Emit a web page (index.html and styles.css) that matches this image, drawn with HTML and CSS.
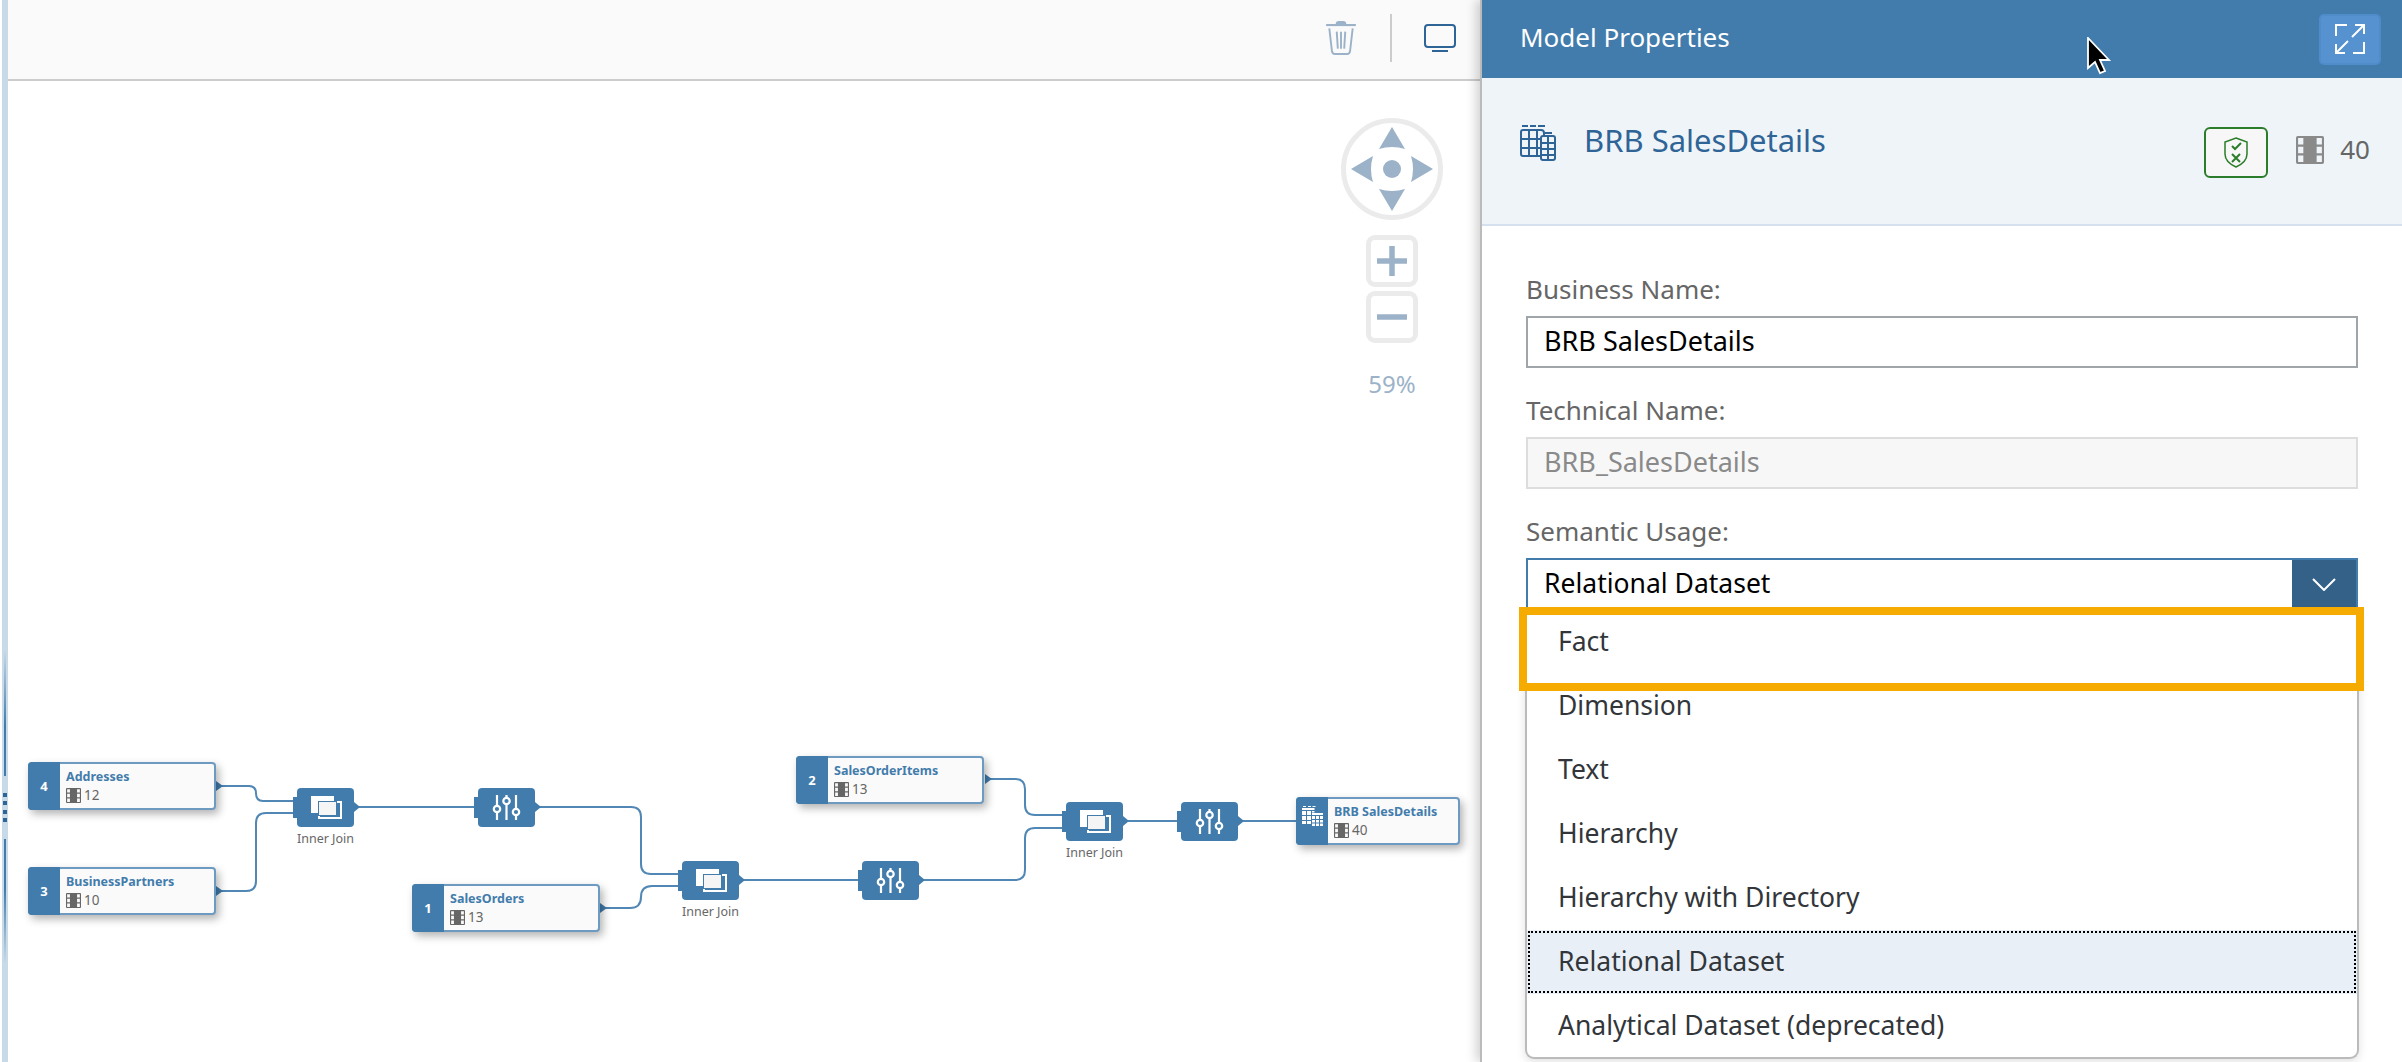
FILE: index.html
```html
<!DOCTYPE html>
<html lang="en">
  <head>
    <meta charset="UTF-8" />
    <title>Model Properties</title>
    <link rel="stylesheet" href="styles.css">
  </head>
  <body>
    <svg class="defs" width="0" height="0">
      <symbol id="columns" viewBox="0 0 16 16">
        <path fill="currentColor" fill-rule="evenodd" d="M0 1a1 1 0 0 1 1-1h14a1 1 0 0 1 1 1v14a1 1 0 0 1-1 1H1a1 1 0 0 1-1-1zM1.2 1.2v3.6h3v-3.6zM1.2 6.2v3.6h3v-3.6zM1.2 11.2v3.6h3v-3.6zM11.8 1.2v3.6h3v-3.6zM11.8 6.2v3.6h3v-3.6zM11.8 11.2v3.6h3v-3.6z"/>
      </symbol>
      <symbol id="join" viewBox="0 0 57 39">
        <rect x="22" y="14" width="22" height="16" fill="none" stroke="#fff" stroke-width="2"/>
        <rect x="14" y="8" width="23" height="17" fill="#fff"/>
        <rect x="21.5" y="13.5" width="18" height="14" fill="#f5f5f5" stroke="#427cac"/>
      </symbol>
      <symbol id="sliders" viewBox="0 0 57 39">
        <path d="M19 7V32M28.500 7V32M38 7V32" stroke="#fff" stroke-width="2.200" fill="none"/>
        <circle cx="19" cy="21" r="3.200" fill="#427cac" stroke="#fff" stroke-width="2.200"/>
        <circle cx="28.500" cy="13" r="3.200" fill="#427cac" stroke="#fff" stroke-width="2.200"/>
        <circle cx="38" cy="24" r="3.200" fill="#427cac" stroke="#fff" stroke-width="2.200"/>
      </symbol>
    </svg>

    <div class="app">
      <div class="workspace">
        <div class="strip">
          <span class="grip-line grip-up"></span>
          <span class="grip-dots"></span>
          <span class="grip-line grip-down"></span>
        </div>
        <div class="editor">
          <div class="toolbar">
            <svg class="trash" width="30" height="34" viewBox="0 0 28 32">
              <path d="M0 3.800H28" stroke="#9cb2c8" stroke-width="2"/>
              <path d="M9 3Q9 0 12 0H16Q19 0 19 3Z" fill="#9cb2c8"/>
              <path d="M3 7L5.500 28.500Q6 31 8 31H20Q22 31 22.500 28.500L25 7M10 10L11 26M14 10V26M18 10L17 26" fill="none" stroke="#9cb2c8" stroke-width="1.800"/>
            </svg>
            <span class="toolbar-sep"></span>
            <svg width="32" height="28" viewBox="0 0 32 28">
              <rect x="1" y="1" width="30" height="22" rx="3" fill="none" stroke="#2f6497" stroke-width="2"/>
              <path d="M8 27H24" stroke="#2f6497" stroke-width="2"/>
            </svg>
          </div>

          <div class="canvas">
            <svg class="wires" width="1472" height="981">
              <g fill="none" stroke="#5187b5" stroke-width="2">
                <path d="M208 705H241Q248 705 248 712.500Q248 720 255 720H285"/>
                <path d="M208 810H238Q248 810 248 800V742Q248 732 258 732H285"/>
                <path d="M346 726H466"/>
                <path d="M527 726H623Q633 726 633 736V783Q633 793 643 793H670"/>
                <path d="M592 827H622Q633 827 633 816Q633 805 644 805H670"/>
                <path d="M730 799H850"/>
                <path d="M977 698H1007Q1017 698 1017 708V724Q1017 734 1027 734H1054"/>
                <path d="M911 799H1007Q1017 799 1017 789V757Q1017 747 1027 747H1054"/>
                <path d="M1115 740H1169"/>
                <path d="M1230 740H1288"/>
              </g>
              <g fill="#427cac">
                <path d="M208 700L215 705L208 710Z"/>
                <path d="M208 805L215 810L208 815Z"/>
                <path d="M592 822L599 827L592 832Z"/>
                <path d="M977 693L984 698L977 703Z"/>
              </g>
            </svg>

            <div class="node node-addresses">
              <div class="node-badge">4</div>
              <div class="node-body">
                <div class="node-title">Addresses</div>
                <div class="node-count"><svg width="15" height="15"><use href="#columns"/></svg>12</div>
              </div>
            </div>
            <div class="node node-partners">
              <div class="node-badge">3</div>
              <div class="node-body">
                <div class="node-title">BusinessPartners</div>
                <div class="node-count"><svg width="15" height="15"><use href="#columns"/></svg>10</div>
              </div>
            </div>
            <div class="node node-orders">
              <div class="node-badge">1</div>
              <div class="node-body">
                <div class="node-title">SalesOrders</div>
                <div class="node-count"><svg width="15" height="15"><use href="#columns"/></svg>13</div>
              </div>
            </div>
            <div class="node node-items">
              <div class="node-badge">2</div>
              <div class="node-body">
                <div class="node-title">SalesOrderItems</div>
                <div class="node-count"><svg width="15" height="15"><use href="#columns"/></svg>13</div>
              </div>
            </div>
            <div class="node node-result">
              <div class="node-badge node-badge-icon">
                <svg width="21" height="20" viewBox="0 0 21 20">
                  <path d="M1 0h3v1H1zM6 0h3v1H6zM10.500 0h3v1h-3z" fill="#fff"/>
                  <path d="M0 2h12.500v2H0zM0 5h4v4H0zM5 5h4v4H5zM0 10h4v4H0zM5 10h4v4H5zM0 15h4v3H0zM5 15h4v3H5zM10 5h2.500v1.500H10z" fill="#fff"/>
                  <path d="M10 7h11v2H10zM10 10h3v3h-3zM14 10h3v3h-3zM18 10h3v3h-3zM10 14h3v2.500h-3zM14 14h3v2.500h-3zM18 14h3v2.500h-3zM10 17.500h3V20h-3zM14 17.500h3V20h-3zM18 17.500h3V20h-3z" fill="#fff"/>
                </svg>
              </div>
              <div class="node-body">
                <div class="node-title">BRB SalesDetails</div>
                <div class="node-count"><svg width="15" height="15"><use href="#columns"/></svg>40</div>
              </div>
            </div>

            <div class="op op-join1"><svg width="57" height="39"><use href="#join"/></svg><span class="op-label">Inner Join</span></div>
            <div class="op op-calc1"><svg width="57" height="39"><use href="#sliders"/></svg></div>
            <div class="op op-join2"><svg width="57" height="39"><use href="#join"/></svg><span class="op-label">Inner Join</span></div>
            <div class="op op-calc2"><svg width="57" height="39"><use href="#sliders"/></svg></div>
            <div class="op op-join3"><svg width="57" height="39"><use href="#join"/></svg><span class="op-label">Inner Join</span></div>
            <div class="op op-calc3"><svg width="57" height="39"><use href="#sliders"/></svg></div>

            <div class="nav-tools">
              <svg width="102" height="102" viewBox="0 0 102 102">
                <circle cx="51" cy="51" r="48.500" fill="#fff" stroke="#ebebeb" stroke-width="5"/>
                <g fill="#9cb2c8">
                  <path d="M51 9L64 31Q51 27 38 31Z"/>
                  <path d="M51 93L64 71Q51 75 38 71Z"/>
                  <path d="M10 51L32 38Q28 51 32 64Z"/>
                  <path d="M92 51L70 38Q74 51 70 64Z"/>
                  <circle cx="51" cy="51" r="9"/>
                </g>
              </svg>
              <div class="zoom-btn zoom-plus">
                <svg width="30" height="30" viewBox="0 0 30 30"><path d="M0 15H30M15 0V30" stroke="#9cb2c8" stroke-width="5.500"/></svg>
              </div>
              <div class="zoom-btn zoom-minus">
                <svg width="30" height="30" viewBox="0 0 30 30"><path d="M0 15H30" stroke="#9cb2c8" stroke-width="5.500"/></svg>
              </div>
              <div class="zoom-value">59%</div>
            </div>
          </div>
        </div>
      </div>

      <aside class="panel">
        <div class="panel-header">
          <span class="panel-title">Model Properties</span>
          <button class="expand-btn">
            <svg width="30" height="30" viewBox="0 0 30 30" fill="none" stroke="#fff" stroke-width="2">
              <path d="M1 12V1H12M29 18V29H18M17 13L29 1M20 1H29V10M13 17L1 29M1 20V29H10"/>
            </svg>
          </button>
        </div>

        <div class="panel-sub">
          <svg class="entity-icon" width="36" height="36" viewBox="0 0 36 36" fill="none" stroke="#2f6497" stroke-width="2">
            <path d="M2 1H8M10 1H16M18 1H25"/>
            <path d="M21 31H3Q1 31 1 29V7Q1 5 3 5H21Q24 5 24 8V10M1 14H21M1 23H21M9 5V31M17 5V31"/>
            <rect x="21" y="11" width="14" height="24" rx="2" fill="#eff4f9"/>
            <path d="M21 18H35M21 24H35M21 30H35M28 11V35"/>
            <path d="M25 8H32"/>
          </svg>
          <span class="entity-name">BRB SalesDetails</span>
          <button class="shield-btn">
            <svg width="24" height="31" viewBox="0 0 24 31" fill="none" stroke="#2b7d2b">
              <path d="M12 1L23 5V17Q23 25 12 30Q1 25 1 17V5Z" stroke-width="1.500"/>
              <path d="M8 9L11 12L17 6M8 17L16 25M16 17L8 25" stroke-width="2"/>
            </svg>
          </button>
          <svg class="sub-columns" width="28" height="28"><use href="#columns"/></svg>
          <span class="sub-count">40</span>
        </div>

        <form class="panel-form">
          <div class="field">
            <label>Business Name:</label>
            <div class="input">BRB SalesDetails</div>
          </div>
          <div class="field">
            <label>Technical Name:</label>
            <div class="input input-disabled">BRB_SalesDetails</div>
          </div>
          <div class="field">
            <label>Semantic Usage:</label>
            <div class="select">
              <span>Relational Dataset</span>
              <span class="select-arrow">
                <svg width="24" height="13" viewBox="0 0 24 13" fill="none" stroke="#fff" stroke-width="2"><path d="M1 1L12 12L23 1"/></svg>
              </span>
              <div class="popup">
                <ul class="options">
                  <li>Fact</li>
                  <li>Dimension</li>
                  <li>Text</li>
                  <li>Hierarchy</li>
                  <li>Hierarchy with Directory</li>
                  <li class="selected">Relational Dataset</li>
                  <li>Analytical Dataset (deprecated)</li>
                </ul>
                <div class="highlight"></div>
              </div>
            </div>
          </div>
        </form>

        <svg class="cursor" width="26" height="38" viewBox="0 0 26 38">
          <path d="M2 1V31L9 25L14 36L19 34L14 23H23Z" fill="#000" stroke="#fff" stroke-width="1.800"/>
        </svg>
      </aside>
    </div>
  </body>
</html>
```

FILE: styles.css
```css
* {
  box-sizing: border-box;
}

html,
body {
  margin: 0;
  padding: 0;
  height: 100%;
  overflow: hidden;
  background-color: #fff;
  font-family: "Noto Sans", Lato, sans-serif;
}

.defs {
  position: absolute;
}

.app {
  display: flex;
  width: 2402px;
  height: 1062px;
}

/* left side */
.workspace {
  display: flex;
  width: 1480px;
  flex-shrink: 0;
}

.strip {
  position: relative;
  width: 6px;
  margin-left: 2px;
  background-color: #c8d9e8;
}

.grip-line {
  position: absolute;
  left: 2px;
  width: 2px;
}

.grip-up {
  top: 650px;
  height: 126px;
  background: linear-gradient(to bottom, #c8d9e8, #427cac 60%);
}

.grip-down {
  top: 839px;
  height: 124px;
  background: linear-gradient(to top, #c8d9e8, #427cac 60%);
}

.grip-dots {
  position: absolute;
  left: 1px;
  top: 793px;
  width: 4px;
  height: 30px;
  background: repeating-linear-gradient(to bottom, #2f6497 0, #2f6497 4px, transparent 4px, transparent 8.500px);
}

.editor {
  display: flex;
  flex-direction: column;
  flex: 1;
}

.toolbar {
  display: flex;
  justify-content: flex-end;
  align-items: center;
  height: 81px;
  padding: 0 24px 3px 0;
  background-color: #fafafa;
  border-bottom: 2px solid #ccc;
}

.toolbar-sep {
  width: 2px;
  height: 48px;
  margin: 0 32px 0 34px;
  background-color: #ccc;
}

.canvas {
  position: relative;
  flex: 1;
}

.wires {
  position: absolute;
  left: 0;
  top: 0;
}

/* diagram nodes */
.node {
  position: absolute;
  display: flex;
  width: 188px;
  height: 48px;
  border: 2px solid #6d9ac1;
  border-radius: 4px;
  background-color: #fafafa;
  box-shadow: 3px 4px 8px rgba(0, 0, 0, 0.3);
}

.node-badge {
  display: flex;
  align-items: center;
  justify-content: center;
  width: 32px;
  margin: -2px 0 -2px -2px;
  border-radius: 4px 0 0 4px;
  background-color: #427cac;
  color: #fff;
  font-size: 13px;
  font-weight: bold;
}

.node-badge-icon {
  align-items: flex-start;
  padding-top: 9px;
}

.node-body {
  padding: 5px 0 0 6px;
}

.node-title {
  color: #427cac;
  font-size: 12.500px;
  font-weight: bold;
  line-height: 16px;
}

.node-count {
  display: flex;
  align-items: center;
  gap: 3px;
  margin-top: 3px;
  color: #666;
  font-size: 13.500px;
  line-height: 15px;
}

.node-addresses {
  left: 20px;
  top: 681px;
}

.node-partners {
  left: 20px;
  top: 786px;
}

.node-orders {
  left: 404px;
  top: 803px;
}

.node-items {
  left: 788px;
  top: 675px;
}

.node-result {
  left: 1288px;
  top: 716px;
  width: 164px;
}

/* join and projection blocks */
.op {
  position: absolute;
  width: 57px;
  height: 39px;
  border-radius: 4px;
  background-color: #427cac;
}

.op svg {
  display: block;
}

.op::before {
  content: "";
  position: absolute;
  left: -4px;
  top: 9px;
  width: 4px;
  height: 21px;
  background-color: #427cac;
}

.op::after {
  content: "";
  position: absolute;
  left: 57px;
  top: 14px;
  border-left: 6px solid #427cac;
  border-top: 5px solid transparent;
  border-bottom: 5px solid transparent;
}

.op-label {
  position: absolute;
  left: -10px;
  right: -10px;
  top: 42px;
  color: #666;
  font-size: 12.500px;
  line-height: 18px;
  text-align: center;
}

.op-join1 {
  left: 289px;
  top: 707px;
}

.op-calc1 {
  left: 470px;
  top: 707px;
}

.op-join2 {
  left: 674px;
  top: 780px;
}

.op-calc2 {
  left: 854px;
  top: 780px;
}

.op-join3 {
  left: 1058px;
  top: 721px;
}

.op-calc3 {
  left: 1173px;
  top: 721px;
}

/* pan and zoom */
.nav-tools {
  position: absolute;
  right: 37px;
  top: 37px;
  display: flex;
  flex-direction: column;
  align-items: center;
  width: 102px;
}

.zoom-btn {
  display: flex;
  align-items: center;
  justify-content: center;
  width: 52px;
  height: 52px;
  border: 5px solid #ebebeb;
  border-radius: 9px;
  background-color: #fff;
}

.zoom-plus {
  margin-top: 15px;
}

.zoom-minus {
  margin-top: 4px;
}

.zoom-value {
  margin-top: 26px;
  color: #9cb2c8;
  font-size: 24px;
  line-height: 30px;
}

/* right panel */
.panel {
  position: relative;
  flex: 1;
  border-left: 2px solid #bbb;
  background-color: #fff;
  box-shadow: -4px 0 10px rgba(0, 0, 0, 0.18);
}

.panel-header {
  display: flex;
  align-items: center;
  justify-content: space-between;
  height: 78px;
  padding: 0 21px 0 38px;
  background-color: #427cac;
  color: #fff;
  font-size: 26px;
}

.panel-title {
  margin-top: -5px;
}

.expand-btn {
  display: flex;
  align-items: center;
  justify-content: center;
  width: 62px;
  height: 51px;
  padding: 0;
  border: 2px solid #4f8cc9;
  border-radius: 5px;
  background-color: #5592cf;
}

.panel-sub {
  display: flex;
  align-items: center;
  height: 148px;
  padding: 0 32px 0 38px;
  background-color: #eff4f9;
  border-bottom: 2px solid #d5e1ee;
}

.entity-icon {
  margin: -17px 0 0 0;
}

.entity-name {
  flex: 1;
  margin: -22px 0 0 28px;
  color: #2f6497;
  font-size: 31px;
}

.shield-btn {
  display: flex;
  align-items: center;
  justify-content: center;
  width: 64px;
  height: 51px;
  margin-top: 2px;
  padding: 0;
  border: 2px solid #2b7d2b;
  border-radius: 6px;
  background-color: #f7f7f7;
}

.sub-columns {
  margin: -3px 0 0 28px;
  color: #8a8a8a;
}

.sub-count {
  margin: -4px 0 0 16px;
  color: #666;
  font-size: 26px;
}

.panel-form {
  padding: 48px 44px 0;
}

.field + .field {
  margin-top: 27px;
}

.field label {
  display: block;
  margin-bottom: 12px;
  color: #666;
  font-size: 26px;
  line-height: 30px;
}

.input {
  height: 52px;
  padding: 0 16px;
  border: 2px solid #a0a5aa;
  color: #000;
  font-size: 27px;
  line-height: 46px;
}

.input-disabled {
  border-color: #ddd;
  background-color: #f7f7f7;
  color: #8a8a8a;
}

.select {
  position: relative;
  display: flex;
  justify-content: space-between;
  height: 52px;
  padding-left: 16px;
  border: 2px solid #427cac;
  color: #000;
  font-size: 26.500px;
  line-height: 46px;
}

.select-arrow {
  display: flex;
  align-items: center;
  justify-content: center;
  width: 64px;
  background-color: #346187;
}

/* dropdown list */
.popup {
  position: absolute;
  left: -3px;
  top: 50px;
  width: 834px;
  height: 449px;
  border: 2px solid #bbb;
  border-top: none;
  border-radius: 0 0 9px 9px;
  background-color: #fff;
  line-height: 62px;
  box-shadow: 0 3px 10px rgba(0, 0, 0, 0.12);
}

.options {
  margin: 0;
  padding: 0;
  list-style: none;
}

.options li {
  height: 64px;
  padding-left: 31px;
  color: #32363a;
  font-size: 26.500px;
}

.options .selected {
  background-color: #e8eff7;
  outline: 2px dotted #000;
  outline-offset: -3px;
}

.highlight {
  position: absolute;
  left: -8px;
  top: -3px;
  width: 845px;
  height: 84px;
  border: 8px solid #f5ab00;
}

.cursor {
  position: absolute;
  left: 604px;
  top: 37px;
}
```
